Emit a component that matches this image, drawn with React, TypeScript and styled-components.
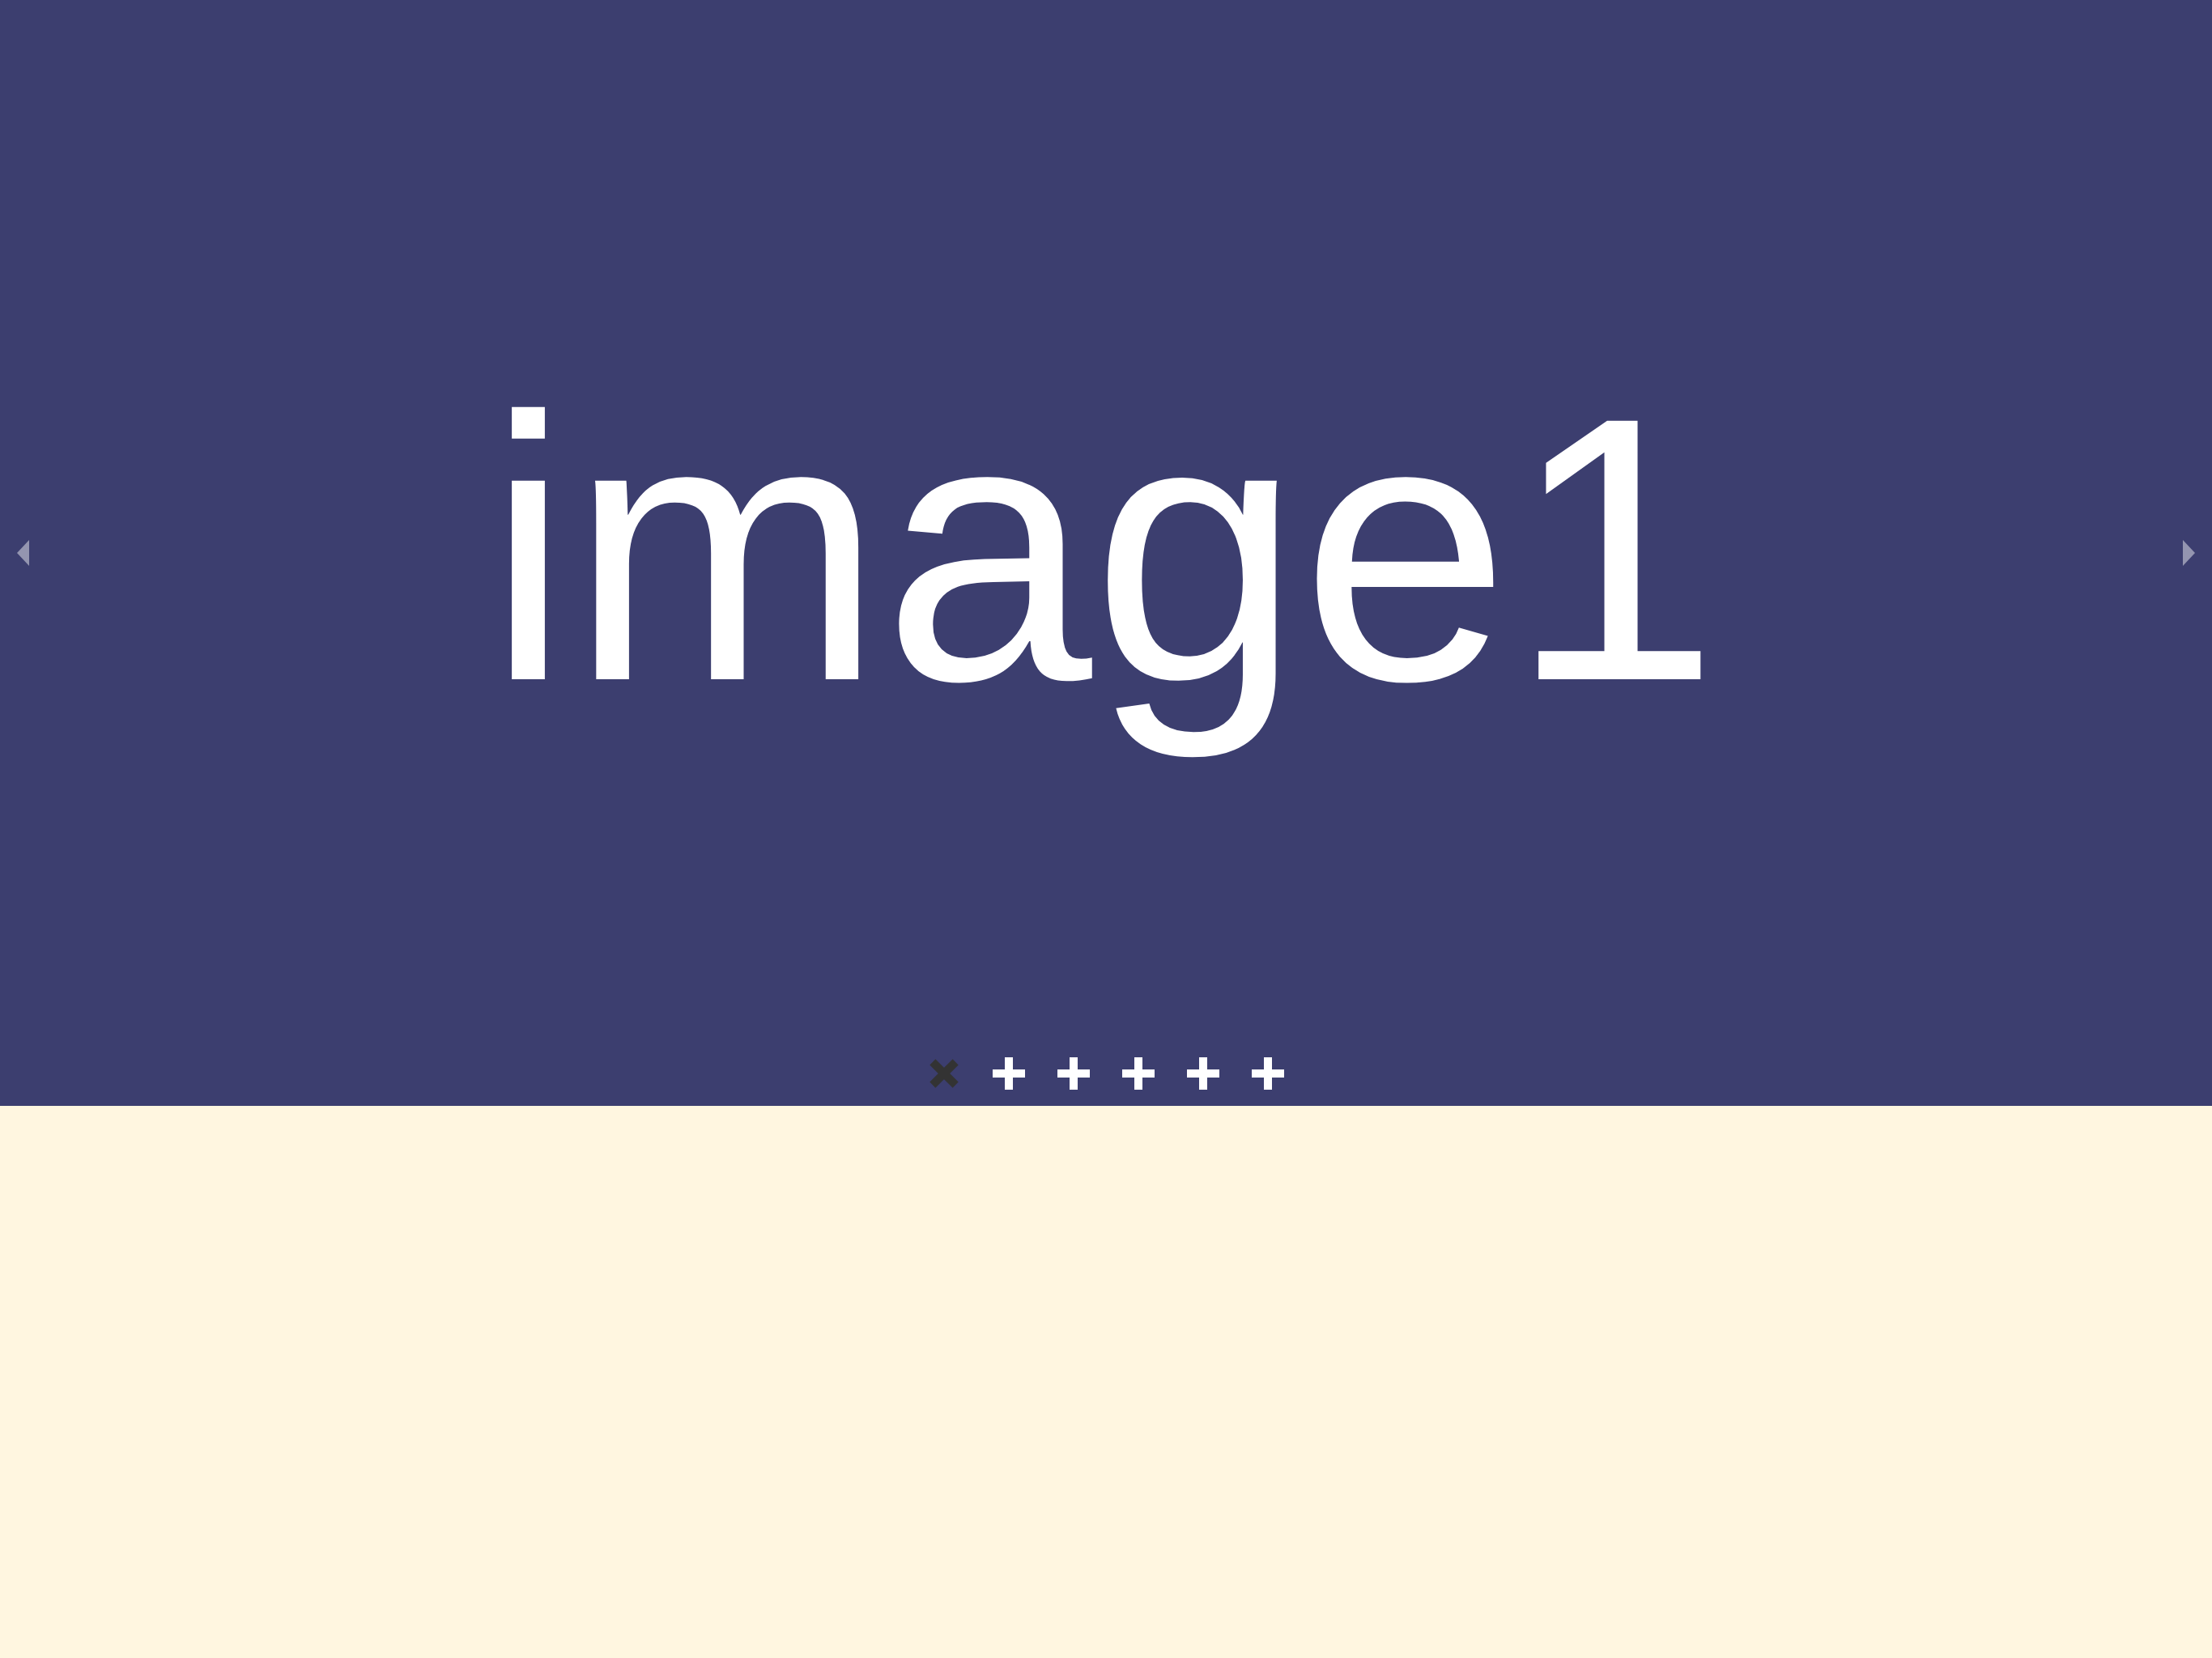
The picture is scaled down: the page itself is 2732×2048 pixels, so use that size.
import React, { useState } from "react";
import styled, { createGlobalStyle } from "styled-components";

const GlobalStyle = createGlobalStyle`
  html, body {
    margin: 0;
    padding: 0;
  }
  body {
    background-color: #fff6e0;
    font-family: "Liberation Sans", Arial, sans-serif;
  }
`;

const Page = styled.div`
  min-height: 100vh;
  background-color: #fff6e0;
`;

const Carousel = styled.section`
  position: relative;
  height: 1366px;
  background-color: #3c3e6f;
  overflow: hidden;
`;

const Slide = styled.div`
  height: 100%;
  display: flex;
  align-items: center;
  justify-content: center;
`;

const SlideLabel = styled.span`
  font-family: "Liberation Sans", Arial, sans-serif;
  font-size: 464px;
  line-height: normal;
  color: #ffffff;
  transform: translate(-4px, -5px);
`;

const Arrow = styled.button<{ $side: "left" | "right" }>`
  position: absolute;
  top: 50%;
  ${(p) => (p.$side === "left" ? "left: 21px;" : "right: 21px;")}
  transform: translateY(-50%);
  width: 15px;
  height: 32px;
  padding: 0;
  border: 0;
  background: transparent;
  cursor: pointer;
  display: flex;

  svg {
    display: block;
  }
`;

const Dots = styled.div`
  position: absolute;
  left: 0;
  right: 0;
  bottom: 20px;
  display: flex;
  justify-content: center;
  gap: 40px;
`;

const Dot = styled.button<{ $active: boolean }>`
  position: relative;
  width: 40px;
  height: 40px;
  padding: 0;
  border: 0;
  background: transparent;
  cursor: pointer;
  transform: rotate(${(p) => (p.$active ? 45 : 0)}deg);

  &::before,
  &::after {
    content: "";
    position: absolute;
    background-color: ${(p) => (p.$active ? "#333333" : "#ffffff")};
  }
  &::before {
    left: 0;
    top: 15px;
    width: 40px;
    height: 10px;
  }
  &::after {
    left: 15px;
    top: 0;
    width: 10px;
    height: 40px;
  }
`;

const slides = ["image1", "image2", "image3", "image4", "image5", "image6"];

export default function App() {
  const [current, setCurrent] = useState(0);
  const go = (step: number) =>
    setCurrent((c) => (c + step + slides.length) % slides.length);

  return (
    <>
      <GlobalStyle />
      <Page>
        <Carousel>
          <Slide>
            <SlideLabel>{slides[current]}</SlideLabel>
          </Slide>
          <Arrow $side="left" aria-label="previous" onClick={() => go(-1)}>
            <svg width="15" height="32" viewBox="0 0 15 32">
              <polygon points="15,0 15,32 0,16" fill="rgba(255,255,255,0.45)" />
            </svg>
          </Arrow>
          <Arrow $side="right" aria-label="next" onClick={() => go(1)}>
            <svg width="15" height="32" viewBox="0 0 15 32">
              <polygon points="0,0 0,32 15,16" fill="rgba(255,255,255,0.45)" />
            </svg>
          </Arrow>
          <Dots>
            {slides.map((s, i) => (
              <Dot
                key={s}
                $active={i === current}
                aria-label={s}
                onClick={() => setCurrent(i)}
              />
            ))}
          </Dots>
        </Carousel>
      </Page>
    </>
  );
}
